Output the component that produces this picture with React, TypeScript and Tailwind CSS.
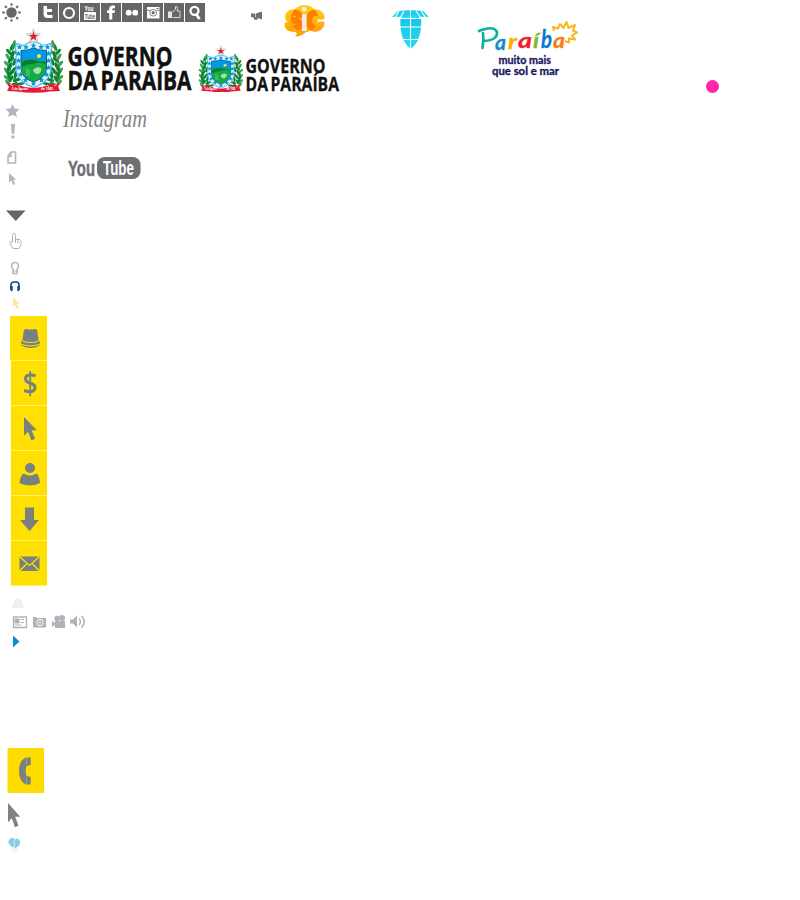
import React from "react";

const GREY = "#666666";
const FONT = "'Open Sans', 'Noto Sans', sans-serif";

type ArtProps = { x: number; y: number; w: number; h: number; className?: string; children: React.ReactNode };

/* A drawing whose inner coordinates are those of the sheet. */
function Art({ x, y, w, h, className = "", children }: ArtProps) {
  return (
    <svg className={"block shrink-0 overflow-visible " + className} width={w} height={h} viewBox={`${x} ${y} ${w} ${h}`}>
      {children}
    </svg>
  );
}

function Tile({ children }: { children: React.ReactNode }) {
  return (
    <svg className="block h-[19px] w-5 shrink-0 overflow-visible bg-[#666666]" viewBox="0 0 20 19" fill="#fff">
      {children}
    </svg>
  );
}

function SocialBar() {
  return (
    <div className="flex h-[26px] items-start gap-px pt-[3px]">
      <Art x={2} y={3} w={19} h={19} className="mr-[16px] ml-[2px]">
        <circle cx="11.500" cy="12.500" r="5.200" fill={GREY} />
        {[0, 45, 90, 135, 180, 225, 270, 315].map((a) => (
          <path key={a} d="M11.500 3.300V5.800" stroke={GREY} strokeWidth="2" transform={`rotate(${a} 11.500 12.500)`} />
        ))}
      </Art>
      <Tile>
        <path d="M5.500 3h3.500v3h5v3H9v1.500q0 1.500 1.500 1.500H14.500V15H9.500Q5.500 15 5.500 10.500Z" />
      </Tile>
      <Tile>
        <circle cx="10" cy="10" r="5" fill="none" stroke="#fff" strokeWidth="2.200" />
      </Tile>
      <Tile>
        <text x="4.500" y="7.500" fontSize="7.500" fontWeight="600" fontFamily="'Liberation Sans', sans-serif" textLength="9" lengthAdjust="spacingAndGlyphs">You</text>
        <rect x="4" y="9" width="12" height="8" rx="1" />
        <text x="4.800" y="15.800" fontSize="7.500" fill={GREY} fontWeight="700" fontFamily="'Liberation Sans', sans-serif" textLength="10.500" lengthAdjust="spacingAndGlyphs">Tube</text>
      </Tile>
      <Tile>
        <path d="M8.200 16.500V10H6V7.200h2.200V6q0-3.500 3.500-3.500H14v2.700h-1.500q-1.200 0-1.200 1.200v.8H14l-.4 2.800h-2.300v6.500Z" />
      </Tile>
      <Tile>
        <circle cx="6.700" cy="9.700" r="2.900" />
        <circle cx="13.200" cy="9.700" r="2.900" />
      </Tile>
      <Tile>
        <path d="M4 4h12.500v11.500H4Z" />
        <path d="M4 7.300h3M13.500 7.300h3" stroke={GREY} strokeWidth=".8" />
        <circle cx="10.200" cy="9.700" r="3.400" fill="none" stroke={GREY} strokeWidth=".8" />
        <circle cx="10.200" cy="9.700" r="1.600" fill={GREY} />
        <path d="M13.500 5.500h2" stroke={GREY} />
      </Tile>
      <Tile>
        <path d="M4 8.500h4V15H4Z" fill="#e4e4e4" />
        <path d="M8.500 9l3-2.500V3.500q2-.3 2 2l-.5 2.500h3v6.500H8.500" fill="none" stroke="#d8d8d8" />
      </Tile>
      <Tile>
        <circle cx="9.500" cy="7.800" r="4" fill="none" stroke="#fff" strokeWidth="2.300" />
        <path d="M11 11l3.500 5" stroke="#fff" strokeWidth="2.800" />
      </Tile>
    </div>
  );
}

const LEAVES: [number, number, number][] = [
  [12, 47, 25], [15.500, 52, 60], [9, 52, -40], [12.500, 55, 15], [8, 57, -30], [11, 60, 50], [14.500, 62, 20],
  [7, 64, -45], [10.500, 66, 20], [14.500, 69, 50], [6.500, 71, -30], [11, 73, 60], [15.500, 75, 10], [7, 78, -50],
  [11, 79, 30], [16.500, 80, 70], [8, 83, -40], [14, 84.500, 60], [20, 84, 80], [14, 44, 15], [8.500, 69, 10], [9, 76, -20],
];

const SHIELD_STARS: [number, number][] = [
  [19.500, 47], [26, 47], [33.500, 45.500], [41, 47], [47.500, 47], [18.500, 53.500], [48.500, 53.500],
  [18.500, 60.500], [48.500, 60.500], [18.500, 67.500], [48.500, 67.500], [20.500, 74.500], [46.500, 74.500], [25.500, 80], [41.500, 80], [33.500, 83.500],
];

function Crest({ w, h, className = "" }: { w: number; h: number; className?: string }) {
  const branch = LEAVES.map(([x, y, a], i) => (
    <ellipse key={i} cx={x} cy={y} rx="1.600" ry="4" fill={i % 3 === 1 ? "#3da456" : "#088535"} transform={`rotate(${a} ${x} ${y})`} />
  ));
  return (
    <svg className={"block shrink-0 overflow-visible " + className} width={w} height={h} viewBox="3 28 60 66" preserveAspectRatio="none">
      <g>{branch}<path d="M15 44L9 61l2 15 8 10" fill="none" stroke="#087d32" /></g>
      <g transform="translate(67 0) scale(-1 1)">
        {branch}
        <path d="M14 43L9 61l3 17 7 8" fill="none" stroke="#c45b39" strokeWidth=".6" />
      </g>
      <path d="M17 43.500q7 3.500 10 0 6.500-3 13 0 3 3.500 10 0l2 4q-2 4-1 10v11q0 13-17.500 19Q16 81 16 68V57.500q1-6-1-10Z" fill="#e3f4fd" stroke="#3ab4ea" strokeWidth="1.100" />
      {SHIELD_STARS.map(([x, y]) => (
        <path key={`${x}-${y}`} transform={`translate(${x} ${y})`} d="M0-2.800l.8 1.800 2 .2-1.500 1.300.5 2L0 1.400l-1.800 1.100.5-2L-2.800-.8l2-.2Z" fill="#0896dd" />
      ))}
      <path d="M21 50.500q7.500 0 12.500-2.500Q38.500 50.500 46.500 50.500V68q0 9.500-13 14Q21 78 21 68Z" fill="#0098e9" stroke="#0a5d84" />
      <path d="M21.500 60.500q5.500-2 8.500-1 4-2.500 7 .5l9 1v7q0 9-12.500 13.500Q21.500 77.500 21.500 68Z" fill="#12ad45" />
      <path d="M22 62q8-4 13-1.500l10.500 1.500v2q-6.500-3-12.500 0-6 0-11 3Z" fill="#087a35" />
      <path d="M33 70q3-4 8-2 1 4-3 6-4 0-5-4Z" fill="#a5dfae" />
      <path d="M27 68v8m2-6v6" stroke="#73cb84" />
      <circle cx="39" cy="56" r="2" fill="#ffe436" />
      <path d="M33.500 29l1.900 4.600 5 .4-3.800 3.200 1.200 4.900-4.300-2.700-4.300 2.700 1.200-4.900-3.800-3.200 5-.4Z" fill="#fff" stroke="#aaa" strokeWidth=".7" />
      <path d="M33.500 31.500l1.200 3.300 3.500.2-2.700 2.100.9 3.400-2.900-1.900-2.900 1.900.9-3.400-2.700-2.100 3.500-.2Z" fill="#df1e32" />
      <path d="M7 83l10 1.500q16 7 33 0L60 83l-2 3 2 5-10 .5q-16 2.500-33 0L7 91l2-4Z" fill="#e71935" />
      <path d="M10 84l3 2M57 84l-3 2M20 85l-2 1.500M47 85l2 1.500" fill="none" stroke="#ffd4d4" strokeWidth=".9" />
      <text x="12" y="89.500" fontSize="3.600" fontWeight="700" fill="#fff" fontFamily={FONT} textLength="16" lengthAdjust="spacingAndGlyphs">5 de Agosto</text>
      <text x="41" y="89.500" fontSize="3.600" fontWeight="700" fill="#fff" fontFamily={FONT} textLength="12" lengthAdjust="spacingAndGlyphs">de 1585</text>
    </svg>
  );
}

function Government() {
  return (
    <div className="flex items-start">
      <Crest w={60} h={66} className="mt-[2px] ml-[3px]" />
      <Art x={63} y={38} w={132} h={56} className="mt-[12px]">
        <g fill="#111" stroke="#111" strokeWidth=".5" fontFamily={FONT} fontWeight="700" fontSize="27.500">
          <text x="67.500" y="65.500" textLength="105" lengthAdjust="spacingAndGlyphs">GOVERNO</text>
          <text x="67.500" y="90" wordSpacing="-3" textLength="124" lengthAdjust="spacingAndGlyphs">DA PARAÍBA</text>
        </g>
      </Art>
      <Crest w={45} h={48} className="mt-[19px] ml-[3px]" />
      <Art x={243} y={50} w={102} h={46} className="mt-[24px]">
        <g fill="#111" stroke="#111" strokeWidth=".3" fontFamily={FONT} fontWeight="700" fontSize="20">
          <text x="245.500" y="73" textLength="80" lengthAdjust="spacingAndGlyphs">GOVERNO</text>
          <text x="245.500" y="91.300" wordSpacing="-2" textLength="93.500" lengthAdjust="spacingAndGlyphs">DA PARAÍBA</text>
        </g>
      </Art>
    </div>
  );
}

function TopMarks() {
  return (
    <div className="flex items-start">
      <Art x={250} y={10} w={14} h={12} className="mt-[10px] ml-[45px]">
        <path d="M251 13.300l4 .4 7-2.200v8l-4.500-1.500-.3 2-3.200-.5-.5-2.300-2.500-.2Z" fill="#707070" />
        <path d="M255.500 13v4" stroke="#fff" strokeWidth=".6" />
      </Art>
      <Art x={282} y={3} w={46} h={36} className="mt-[3px] ml-[18px]">
        <defs>
          <linearGradient id="sun" gradientUnits="userSpaceOnUse" x1="0" y1="5" x2="0" y2="36">
            <stop stopColor="#ffd21b" /><stop offset="1" stopColor="#ff9a00" />
          </linearGradient>
          <clipPath id="bubble"><ellipse cx="304.500" cy="18.500" rx="13.500" ry="13.500" /></clipPath>
        </defs>
        <ellipse cx="304.500" cy="18.500" rx="13.500" ry="13.500" fill="url(#sun)" />
        <path d="M294 31q5 2 1 5.500 8 0 12-6Z" fill="#ffa400" />
        <g fontFamily="'Inter', sans-serif" fontWeight="700" fontSize="26" strokeLinejoin="round" fill="url(#sun)" stroke="url(#sun)" strokeWidth="3.600">
          <text x="285.500" y="29.500" textLength="17" lengthAdjust="spacingAndGlyphs">S</text>
          <text x="306" y="29.500" textLength="18" lengthAdjust="spacingAndGlyphs">C</text>
        </g>
        <g clipPath="url(#bubble)" aria-hidden="true" fontFamily="'Inter', sans-serif" fontWeight="700" fontSize="26" strokeLinejoin="round" fill="#ff7d00" stroke="#ff7d00" strokeWidth="2.800">
          <text x="285.500" y="29.500" textLength="17" lengthAdjust="spacingAndGlyphs">S</text>
          <text x="306" y="29.500" textLength="18" lengthAdjust="spacingAndGlyphs">C</text>
        </g>
        <text x="300.500" y="31" fontFamily="'Inter', sans-serif" fontWeight="700" fontSize="31" fill="#eceef2" textLength="8" lengthAdjust="spacingAndGlyphs">i</text>
      </Art>
      <Art x={391} y={8} w={40} h={42} className="mt-[8px] ml-[63px]">
        <defs>
          <linearGradient id="aqua" x1="0" y1="0" x2="0" y2="1">
            <stop stopColor="#18c4e8" /><stop offset="1" stopColor="#24dcf2" />
          </linearGradient>
        </defs>
        <path d="M392 17l6-6q12-1.500 25 0l6 6q-8-1-11 1h-15q-3-2-11-1Z" fill="url(#aqua)" />
        <path d="M400.500 18h20.500q1 12-3 22-3 6-7.500 9-4-3-7-9-4-10-3-22Z" fill="url(#aqua)" />
        <path d="M398 18.500h25M399 27h24M400 39.500h22M410.500 9v40M399 11l-4 7M404 11l-4 7M421 11l5 7M416 11l5 7" fill="none" stroke="#fff" strokeWidth="1.100" />
      </Art>
      <Art x={470} y={18} w={115} h={64} className="mt-[18px] ml-[39px]">
        <path d="M554 31l-1-4 5 1.500 2-4.500 3.500 4 3-6 2 6 6.500-3-2 5.500 4 2-5 3 3 4-6-1v4l-4-1.500" fill="none" stroke="#ffb41c" strokeWidth="2" strokeLinejoin="round" />
        <path d="M483 33q1 7-.5 15M479 31q15-6 18 1 1 8-13 9" fill="none" stroke="#10ad9e" strokeWidth="2.700" strokeLinecap="round" />
        <g fontFamily="'Lato', sans-serif" fontWeight="700" fontSize="21" fontStyle="italic" strokeWidth=".3">
          <text x="495" y="50" fill="#178bd0" stroke="#178bd0" textLength="11" lengthAdjust="spacingAndGlyphs">a</text>
          <text x="508" y="49" fill="#ffac00" stroke="#ffac00" textLength="9" lengthAdjust="spacingAndGlyphs">r</text>
          <text x="518" y="48" fill="#ed2029" stroke="#ed2029" textLength="14" lengthAdjust="spacingAndGlyphs">a</text>
          <text x="533" y="48" fill="#77bd22" stroke="#77bd22" textLength="6" lengthAdjust="spacingAndGlyphs">í</text>
          <text x="541" y="48" fontSize="24" fill="#087bd0" stroke="#087bd0" textLength="11" lengthAdjust="spacingAndGlyphs">b</text>
          <text x="553" y="48" fill="#f57a18" stroke="#f57a18" textLength="12" lengthAdjust="spacingAndGlyphs">a</text>
        </g>
        <g fontFamily="'Lato', sans-serif" fontWeight="700" fontSize="11" fill="#17145d" stroke="#17145d" strokeWidth=".3">
          <text x="498.500" y="63.500" textLength="52.500" lengthAdjust="spacingAndGlyphs">muito mais</text>
          <text x="492" y="74.500" textLength="67" lengthAdjust="spacingAndGlyphs">que sol e mar</text>
        </g>
      </Art>
      <div className="mt-[80px] ml-[121px] h-[13px] w-[13px] shrink-0 rounded-full bg-[#ff26a8]" />
    </div>
  );
}

const POINTER = "M0 0v16l3.800-3.500 3 7.500 3.500-1.500-3.300-7.200h5Z";

function SmallIcons() {
  return (
    <Art x={0} y={98} w={50} h={218}>
      <path d="M12.500 104l2 4.500 5 .5-3.700 3.500 1.200 4.500-4.500-2.300-4.500 2.300 1.200-4.500L5.500 109l5-.5Z" fill="#b1b3c4" />
      <path d="M10.800 124h4.400l-1 10h-2.400Z" fill="#b8b8b8" /><circle cx="13" cy="137" r="1.700" fill="#b8b8b8" />
      <path d="M11 152h4.500v11H8v-7l3-4v4.500H8" fill="none" stroke="#b3b5c3" strokeWidth="1.600" strokeLinejoin="round" />
      <path d={POINTER} transform="translate(9 173) scale(.6)" fill="#b3b5c5" />
      <path d="M6 210.500h19.500L15.800 221Z" fill={GREY} />
      <path d="M12.500 242v-6.500q0-2 1.500-2t1.500 2v5l1-1.500 1.500 1 1-1 1.500 1.500q.8 0 .5 2v2l-2 4H13l-3.500-6q1-2 3 0M15.500 240v3M18 240.500v3" fill="none" stroke="#b2b2b2" />
      <path d="M13 270q0-1-1.200-2.500-1-5 3.200-5t3.200 5Q17 269 17 270v3.500h-4Z" fill="none" stroke="#b6b6b6" strokeWidth="1.500" /><path d="M13 271h4" stroke="#b6b6b6" />
      <path d="M11 288v-3q0-3 3-3h2q3 0 3 3v3" fill="none" stroke="#124b86" strokeWidth="1.500" />
      <path d="M10 286h2.700v5H11l-1-1.500ZM17.300 286h2.700v3.500l-1 1.500h-1.700Z" fill="#124b86" />
      <path d={POINTER} transform="translate(13 297.500) scale(.57)" fill="#ffe3a0" />
    </Art>
  );
}

function YellowCell({ first = false, children }: { first?: boolean; children: React.ReactNode }) {
  return (
    <div className={"flex h-[45px] shrink-0 justify-end border-b border-[#fff06b] bg-[#ffe000] " + (first ? "w-[37px]" : "w-9")}>
      <svg className="block h-11 w-9 overflow-visible" viewBox="0 0 36 44" fill="#788080">{children}</svg>
    </div>
  );
}

function YellowMenu() {
  return (
    <div className="ml-[10px] flex h-[270px] w-[37px] flex-col items-end">
      <YellowCell first>
        <path d="M12.500 16q0-3 3-3 4 1 8 0 3 0 3 3l1 8.500q-8 3-16 0Z" />
        <path d="M10 25.500q2-1 3 .7 6.500 1.500 13 0 1-1.700 3-.7v3.500q-4 3-9.500 3T10 29Z" /><path d="M10 28q9.500 4 19 0" stroke="#ffe000" strokeWidth="1.200" fill="none" />
      </YellowCell>
      <YellowCell>
        <text x="11.500" y="33" fontSize="30" fontWeight="600" fontFamily={FONT} textLength="15" lengthAdjust="spacingAndGlyphs">$</text>
      </YellowCell>
      <YellowCell><path d={POINTER} transform="translate(13 11) scale(1.080 1.180)" /></YellowCell>
      <YellowCell><circle cx="19" cy="17" r="5" /><path d="M12.500 22.500q6.500 4 13 0 3 2.500 3.500 9.500-10 5-20.500 0 .5-7 4-9.500Z" /></YellowCell>
      <YellowCell><path d="M14 11.500h9V24h5l-9.500 11L9 24h5Z" /></YellowCell>
      <YellowCell>
        <path d="M8.500 15.500h20v14.500h-20Z" /><path d="M8.500 15.500l10 9 10-9M8.500 30l7-7M28.500 30l-7-7" fill="none" stroke="#ffe000" strokeWidth="1.300" />
      </YellowCell>
    </div>
  );
}

function MediaIcons() {
  return (
    <div className="flex h-[162px] flex-col items-start">
      <Art x={12} y={597} w={12} h={12} className="mt-[11px] ml-[12px]">
        <path d="M13 604q0-3 3-5h4q3 2 3 5l1 4H12Z" fill="#f0f0f0" />
      </Art>
      <div className="mt-[6px] ml-[12px] flex items-start">
        <Art x={12} y={615} w={16} h={14}>
          <path d="M13.500 617h13v10.500h-13Z" fill="#fff" stroke="#adb1b9" strokeWidth="1.300" />
          <path d="M15 619h4v4h-4ZM20.500 619.500h3.500M20.500 622.500h3.500M15 625h6" fill="#adb1b9" stroke="#adb1b9" />
        </Art>
        <Art x={32} y={615} w={15} h={14} className="ml-[4px]">
          <path d="M33 617h3l1 1h9v9.500H33Z" fill="#b0b2ba" /><circle cx="40" cy="622.500" r="3.200" fill="#b0b2ba" stroke="#fff" /><circle cx="40" cy="622.500" r="1" fill="#fff" />
        </Art>
        <Art x={51} y={615} w={15} h={14} className="ml-[4px]">
          <circle cx="57" cy="618.500" r="2.700" fill="#b0b2ba" /><circle cx="62" cy="618" r="3" fill="#b0b2ba" />
          <path d="M55 621h10v7H55v-3l-3 2v-6l3 2Z" fill="#b0b2ba" />
        </Art>
        <Art x={70} y={615} w={16} h={14} className="ml-[4px]">
          <path d="M70 619.500h3l4-4v12l-4-4h-3Z" fill="#b0b2ba" /><path d="M79 618.500q3 3 0 6.500M81.500 616q5.500 5.500 0 11.500" fill="none" stroke="#b0b2ba" strokeWidth="1.500" />
        </Art>
      </div>
      <Art x={13} y={635} w={7} h={13} className="mt-[6px] ml-[13px]"><path d="M13 635.500l6.500 6-6.500 6Z" fill="#0989da" /></Art>
    </div>
  );
}

export default function App() {
  return (
    <main className="flex h-[900px] w-[800px] flex-col overflow-hidden bg-white">
      <header className="flex h-[98px] shrink-0 items-start">
        <div className="w-[205px] shrink-0">
          <SocialBar />
          <Government />
        </div>
        <TopMarks />
      </header>
      <div className="flex items-start">
        <div className="flex w-[60px] shrink-0 flex-col">
          <SmallIcons />
          <YellowMenu />
          <MediaIcons />
          <Art x={0} y={748} w={60} h={112}>
            <path d="M7.500 748h36.500v45H7.500Z" fill="#ffdc00" />
            <path d="M30.700 757.500v7.500l-4 1q-2 5 0 10l4 1v7.500h-4.700q-7-3-7-13.500t7-13.500Z" fill="#7b8080" />
            <path d="M26.500 758v7M26.500 777v7" stroke="#c6b138" strokeWidth=".7" />
            <path d={POINTER} transform="translate(8 803) scale(1.020 1.210)" fill="#7d8285" />
            <path d="M12.500 847q-5-3-4-6 3-6 7-1v6Z" fill="#86cceb" /><path d="M14 845q-2-5 3-6.500 5 2 2 7l-4 3Z" fill="#86cceb" />
            <path d="M12 847q2 2 1 4M16 848v4" stroke="#c9e9f5" fill="none" /><path d="M14.500 839v7" stroke="#fff" strokeWidth=".5" />
          </Art>
        </div>
        <Art x={60} y={98} w={95} h={92}>
          <text x="63" y="127" fontFamily="'Liberation Serif', serif" fontStyle="italic" fontSize="25" fill="#858585" textLength="84" lengthAdjust="spacingAndGlyphs">Instagram</text>
          <rect x="97" y="157" width="43.500" height="22" rx="7.500" fill="#6e6e75" />
          <g fontFamily="'Liberation Sans Narrow', 'Liberation Sans', sans-serif" fontWeight="700">
            <text x="68" y="176" fontSize="22.500" fill="#6e6e75" stroke="#6e6e75" strokeWidth=".5" textLength="27" lengthAdjust="spacingAndGlyphs">You</text>
            <text x="103" y="175" fontSize="20.500" fill="#fff" textLength="31" lengthAdjust="spacingAndGlyphs">Tube</text>
          </g>
        </Art>
      </div>
    </main>
  );
}
